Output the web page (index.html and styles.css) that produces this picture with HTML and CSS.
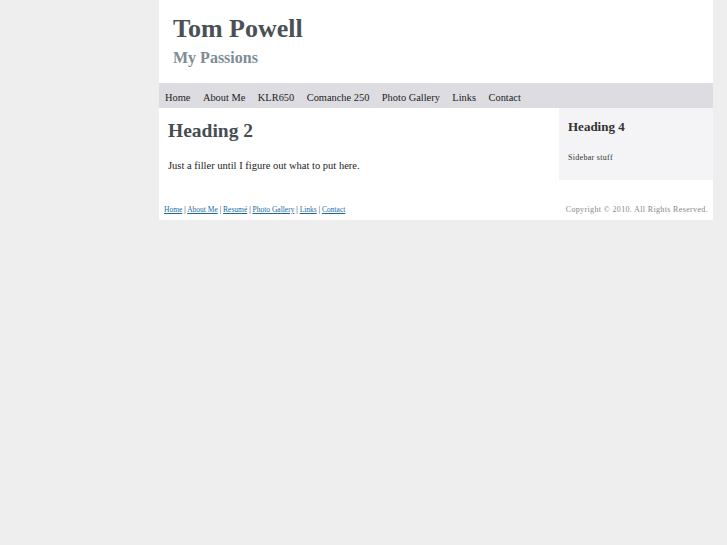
FILE: index.html
```html
<!DOCTYPE html>
<html lang="en">
<head>
    <meta charset="UTF-8">
    <title>Tom Powell - My Passions</title>
    <link rel="stylesheet" href="styles.css">
</head>
<body>
    <div id="wrapper">
        <div id="header">
            <h1>Tom Powell</h1>
            <h2>My Passions</h2>
        </div>
        <ul id="nav">
            <li><a href="#">Home</a></li>
            <li><a href="#">About Me</a></li>
            <li><a href="#">KLR650</a></li>
            <li><a href="#">Comanche 250</a></li>
            <li><a href="#">Photo Gallery</a></li>
            <li><a href="#">Links</a></li>
            <li><a href="#">Contact</a></li>
        </ul>
        <div id="main">
            <div id="content">
                <h2>Heading 2</h2>
                <p>Just a filler until I figure out what to put here.</p>
            </div>
            <div id="sidebar">
                <h4>Heading 4</h4>
                <p>Sidebar stuff</p>
            </div>
        </div>
        <div id="footer">
            <div class="links">
                <a href="#">Home</a> | <a href="#">About Me</a> | <a href="#">Resumé</a> | <a href="#">Photo Gallery</a> | <a href="#">Links</a> | <a href="#">Contact</a>
            </div>
            <div class="copy">Copyright &copy; 2010. All Rights Reserved.</div>
        </div>
    </div>
</body>
</html>
```

FILE: styles.css
```css
body {
    margin: 0;
    background-color: #eeeeee;
    font-family: "Liberation Serif", "Times New Roman", serif;
    color: #222;
}
#wrapper {
    width: 554px;
    margin-left: 159px;
    background-color: #fff;
}
#header {
    height: 83px;
    padding: 13px 0 0 14px;
    box-sizing: border-box;
}
#header h1 {
    margin: 0;
    font-size: 26px;
    color: #4a5156;
    line-height: 32px;
}
#header h2 {
    margin: 3px 0 0;
    font-size: 16px;
    color: #7d8c96;
    line-height: 20px;
}
#nav {
    list-style: none;
    margin: 0;
    padding: 0 0 0 6px;
    height: 25px;
    background-color: #dcdce1;
    display: flex;
    align-items: center;
    gap: 12.5px;
}
#nav a {
    font-size: 10.4px;
    color: #222;
    text-decoration: none;
}
#main {
    display: flex;
}
#content {
    flex: 1;
    padding: 11px 9px 0;
}
#content h2 {
    margin: 0;
    font-size: 19.5px;
    color: #454d53;
    line-height: 24px;
}
#content p {
    margin: 17px 0 0;
    font-size: 10.5px;
}
#sidebar {
    width: 154px;
    height: 72px;
    box-sizing: border-box;
    background-color: #f4f4f6;
    padding: 11px 9px 0;
}
#sidebar h4 {
    margin: 0;
    font-size: 13px;
    color: #333;
}
#sidebar p {
    margin: 18px 0 0;
    font-size: 8px;
    letter-spacing: 0.3px;
    color: #333;
}
#footer {
    display: flex;
    justify-content: space-between;
    align-items: flex-end;
    height: 40px;
    padding: 0 5px 6px;
    box-sizing: border-box;
}
#footer .links {
    font-size: 7.5px;
    color: #222;
}
#footer .links a {
    color: #1a6c9c;
}
#footer .copy {
    font-size: 8px;
    color: #888;
    letter-spacing: 0.35px;
}
```
